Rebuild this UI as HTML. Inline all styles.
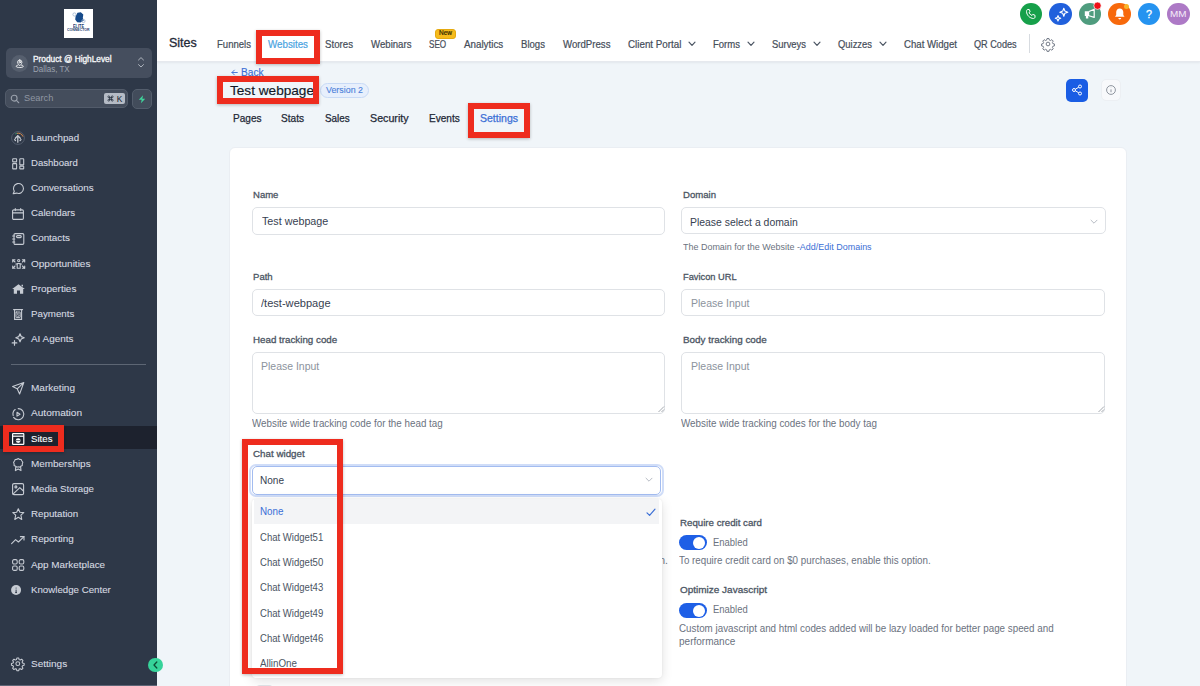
<!DOCTYPE html>
<html><head><meta charset="utf-8">
<style>
*{box-sizing:border-box;margin:0;padding:0}
html,body{width:1200px;height:686px;overflow:hidden;font-family:"Liberation Sans",sans-serif;position:relative;background:#f0f5f9}
.a{position:absolute}
.t{position:absolute;white-space:nowrap}
svg{overflow:visible}
</style></head><body>
<div class="a" style="left:0px;top:0px;width:1200px;height:686px;background:#f0f5f9"></div>
<div class="a" style="left:157px;top:0px;width:1043px;height:62px;background:#fff;box-shadow:0 1px 2px rgba(16,24,40,0.06);border-bottom:1px solid #e6e9ee"></div>
<div class="t " style="left:168.60px;top:37.32px;color:#1f2937;font-size:12.5px;line-height:12.5px;font-weight:normal;-webkit-text-stroke:0.3px #1f2937;transform:scaleX(1.0001);transform-origin:0 0;">Sites</div>
<div class="t " style="left:216.60px;top:39.75px;color:#454d59;font-size:10.1px;line-height:10.1px;font-weight:normal;-webkit-text-stroke:0.2px #454d59;transform:scaleX(0.9465);transform-origin:0 0;">Funnels</div>
<div class="t " style="left:268.00px;top:39.75px;color:#4aa3df;font-size:10.1px;line-height:10.1px;font-weight:normal;-webkit-text-stroke:0.2px #4aa3df;transform:scaleX(0.9679);transform-origin:0 0;">Websites</div>
<div class="t " style="left:325.20px;top:39.75px;color:#454d59;font-size:10.1px;line-height:10.1px;font-weight:normal;-webkit-text-stroke:0.2px #454d59;transform:scaleX(0.9593);transform-origin:0 0;">Stores</div>
<div class="t " style="left:370.50px;top:39.75px;color:#454d59;font-size:10.1px;line-height:10.1px;font-weight:normal;-webkit-text-stroke:0.2px #454d59;transform:scaleX(0.9540);transform-origin:0 0;">Webinars</div>
<div class="t " style="left:429.00px;top:39.75px;color:#454d59;font-size:10.1px;line-height:10.1px;font-weight:normal;-webkit-text-stroke:0.2px #454d59;transform:scaleX(0.8064);transform-origin:0 0;">SEO</div>
<div class="t " style="left:463.80px;top:39.75px;color:#454d59;font-size:10.1px;line-height:10.1px;font-weight:normal;-webkit-text-stroke:0.2px #454d59;transform:scaleX(0.9705);transform-origin:0 0;">Analytics</div>
<div class="t " style="left:521.00px;top:39.75px;color:#454d59;font-size:10.1px;line-height:10.1px;font-weight:normal;-webkit-text-stroke:0.2px #454d59;transform:scaleX(0.9505);transform-origin:0 0;">Blogs</div>
<div class="t " style="left:562.50px;top:39.75px;color:#454d59;font-size:10.1px;line-height:10.1px;font-weight:normal;-webkit-text-stroke:0.2px #454d59;transform:scaleX(0.9551);transform-origin:0 0;">WordPress</div>
<div class="t " style="left:627.60px;top:39.75px;color:#454d59;font-size:10.1px;line-height:10.1px;font-weight:normal;-webkit-text-stroke:0.2px #454d59;transform:scaleX(0.9712);transform-origin:0 0;">Client Portal</div>
<div class="t " style="left:713.00px;top:39.75px;color:#454d59;font-size:10.1px;line-height:10.1px;font-weight:normal;-webkit-text-stroke:0.2px #454d59;transform:scaleX(0.9437);transform-origin:0 0;">Forms</div>
<div class="t " style="left:772.00px;top:39.75px;color:#454d59;font-size:10.1px;line-height:10.1px;font-weight:normal;-webkit-text-stroke:0.2px #454d59;transform:scaleX(0.9323);transform-origin:0 0;">Surveys</div>
<div class="t " style="left:838.00px;top:39.75px;color:#454d59;font-size:10.1px;line-height:10.1px;font-weight:normal;-webkit-text-stroke:0.2px #454d59;transform:scaleX(0.9323);transform-origin:0 0;">Quizzes</div>
<div class="t " style="left:904.00px;top:39.75px;color:#454d59;font-size:10.1px;line-height:10.1px;font-weight:normal;-webkit-text-stroke:0.2px #454d59;transform:scaleX(0.9541);transform-origin:0 0;">Chat Widget</div>
<div class="t " style="left:974.40px;top:39.75px;color:#454d59;font-size:10.1px;line-height:10.1px;font-weight:normal;-webkit-text-stroke:0.2px #454d59;transform:scaleX(0.9040);transform-origin:0 0;">QR Codes</div>
<svg class="a" style="left:688px;top:41px" width="8" height="6" viewBox="0 0 8 6"><path d="M1 1.2 L4 4.4 L7 1.2" fill="none" stroke="#4b5563" stroke-width="1.2" stroke-linecap="round" stroke-linejoin="round"/></svg>
<svg class="a" style="left:747.4px;top:41px" width="8" height="6" viewBox="0 0 8 6"><path d="M1 1.2 L4 4.4 L7 1.2" fill="none" stroke="#4b5563" stroke-width="1.2" stroke-linecap="round" stroke-linejoin="round"/></svg>
<svg class="a" style="left:813px;top:41px" width="8" height="6" viewBox="0 0 8 6"><path d="M1 1.2 L4 4.4 L7 1.2" fill="none" stroke="#4b5563" stroke-width="1.2" stroke-linecap="round" stroke-linejoin="round"/></svg>
<svg class="a" style="left:879px;top:41px" width="8" height="6" viewBox="0 0 8 6"><path d="M1 1.2 L4 4.4 L7 1.2" fill="none" stroke="#4b5563" stroke-width="1.2" stroke-linecap="round" stroke-linejoin="round"/></svg>
<div class="a" style="left:435.2px;top:29px;width:20.6px;height:9.6px;background:#f6bb1c;border:0.6px solid #e5aa10;border-radius:3px"></div>
<div class="t " style="left:438.80px;top:30.44px;color:#2f2600;font-size:6.8px;line-height:6.8px;font-weight:normal;-webkit-text-stroke:0.2px #2f2600;transform:scaleX(0.9552);transform-origin:0 0;">New</div>
<div class="a" style="left:1029px;top:34px;width:1px;height:19px;background:#d7dbe0"></div>
<svg class="a" style="left:1041px;top:36.7px" width="14" height="14" viewBox="0 0 24 24"><path fill="none" stroke="#6b7280" stroke-width="1.6" stroke-linejoin="round" d="M10.3 2.6h3.4l.6 2.7 1.9.8 2.4-1.5 2.4 2.4-1.5 2.4.8 1.9 2.7.6v3.4l-2.7.6-.8 1.9 1.5 2.4-2.4 2.4-2.4-1.5-1.9.8-.6 2.7h-3.4l-.6-2.7-1.9-.8-2.4 1.5-2.4-2.4 1.5-2.4-.8-1.9-2.7-.6v-3.4l2.7-.6.8-1.9-1.5-2.4 2.4-2.4 2.4 1.5 1.9-.8z"/><circle cx="12" cy="12" r="3.2" fill="none" stroke="#6b7280" stroke-width="1.6"/></svg>
<div class="a" style="left:1019.75px;top:2.5px;width:22.5px;height:22.5px;background:#16a04a;border-radius:50%"></div>
<div class="a" style="left:1049.15px;top:2.5px;width:22.5px;height:22.5px;background:#2160dc;border-radius:50%"></div>
<div class="a" style="left:1078.75px;top:2.5px;width:22.5px;height:22.5px;background:#4f9c7e;border-radius:50%"></div>
<div class="a" style="left:1108.05px;top:2.5px;width:22.5px;height:22.5px;background:#f7690c;border-radius:50%"></div>
<div class="a" style="left:1137.5px;top:2.5px;width:22.5px;height:22.5px;background:#2593f0;border-radius:50%"></div>
<div class="a" style="left:1167.0px;top:2.5px;width:22.5px;height:22.5px;background:#ad79c6;border-radius:50%"></div>
<svg class="a" style="left:1025px;top:8px" width="12" height="12" viewBox="0 0 24 24"><path fill="none" stroke="#fff" stroke-width="2" stroke-linejoin="round" d="M5 3h3.5l1.8 4.5-2.3 1.6c1 2.4 3.4 4.8 5.9 5.9l1.6-2.3L20 14.5V18c0 1.7-1.3 3-3 3C9.3 20.5 3.5 14.7 3 7c0-1.7 1.3-4 2-4z"/></svg>
<svg class="a" style="left:1052.5px;top:6.5px" width="16" height="16" viewBox="0 0 16 16"><g fill="none" stroke="#fff" stroke-width="1.1" stroke-linejoin="round"><path d="M10.8 1.2 L11.9 4.1 L14.8 5.2 L11.9 6.3 L10.8 9.2 L9.7 6.3 L6.8 5.2 L9.7 4.1 Z"/><path d="M5 8.6 L5.8 10.5 L7.7 11.3 L5.8 12.1 L5 14 L4.2 12.1 L2.3 11.3 L4.2 10.5 Z"/></g></svg>
<svg class="a" style="left:1078px;top:0px" width="26" height="26" viewBox="0 0 26 26"><path d="M6.8 11.2 H11.2 V16 H6.8 Z M7.9 16 H10.3 V18.4 H7.9 Z" fill="#fff"/><path d="M11 11.5 L16.2 9.2 V17.4 L11 15.8" fill="none" stroke="#fff" stroke-width="1.2" stroke-linejoin="round"/><circle cx="19.5" cy="5.7" r="3.7" fill="#ee0f16" stroke="#fff" stroke-width="0.7"/></svg>
<svg class="a" style="left:1112.6px;top:6.8px" width="13.5" height="13.5" viewBox="0 0 24 24"><path fill="#fff" d="M12 2.5c-3.6 0-6.3 2.8-6.3 6.5v5L3.5 17.5h17L18.3 14V9c0-3.7-2.7-6.5-6.3-6.5z M9.5 19.5h5c0 1.4-1.1 2.5-2.5 2.5s-2.5-1.1-2.5-2.5z"/></svg>
<div class="a" style="left:1123.5px;top:4.3px;width:5px;height:5px;background:#f9b52b;border-radius:50%"></div>
<div class="t " style="left:1145.50px;top:8.71px;color:#fff;font-size:10.5px;line-height:10.5px;font-weight:normal;-webkit-text-stroke:0.3px #fff;transform:scaleX(1.0267);transform-origin:0 0;">?</div>
<div class="t " style="left:1170.00px;top:8.94px;color:#f5ecf9;font-size:9.4px;line-height:9.4px;font-weight:normal;;transform:scaleX(1.0560);transform-origin:0 0;">MM</div>
<svg class="a" style="left:230.5px;top:68.5px" width="7" height="7" viewBox="0 0 10 10"><path d="M9 5H1.5M4.8 1.6 1.4 5l3.4 3.4" fill="none" stroke="#3b6fd6" stroke-width="1.3" stroke-linecap="round" stroke-linejoin="round"/></svg>
<div class="t " style="left:240.70px;top:67.78px;color:#3b6fd6;font-size:10px;line-height:10px;font-weight:normal;-webkit-text-stroke:0.15px #3b6fd6;transform:scaleX(1.0119);transform-origin:0 0;">Back</div>
<div class="t " style="left:230.25px;top:83.80px;color:#111827;font-size:13px;line-height:13px;font-weight:normal;-webkit-text-stroke:0.15px #111827;transform:scaleX(1.0469);transform-origin:0 0;">Test webpage</div>
<div class="a" style="left:320.25px;top:83.25px;width:48.5px;height:14.25px;background:#e7effc;border:1px solid #c8daf6;border-radius:8px"></div>
<div class="t " style="left:326.25px;top:86.18px;color:#4a80da;font-size:9px;line-height:9px;font-weight:normal;-webkit-text-stroke:0.1px #4a80da;transform:scaleX(0.9858);transform-origin:0 0;">Version 2</div>
<div class="a" style="left:1066.2px;top:79px;width:22.2px;height:22.6px;background:#1a5de4;border-radius:5px"></div>
<svg class="a" style="left:1071.2px;top:84.2px" width="12" height="12" viewBox="0 0 24 24"><g fill="none" stroke="#fff" stroke-width="2"><circle cx="18" cy="5" r="3"/><circle cx="6" cy="12" r="3"/><circle cx="18" cy="19" r="3"/><path d="M8.6 13.5l6.8 4M15.4 6.5l-6.8 4"/></g></svg>
<div class="a" style="left:1101px;top:79.3px;width:20px;height:22px;background:#f8f9fb;border:1px solid #eceff3;border-radius:5px"></div>
<svg class="a" style="left:1104.9px;top:84.3px" width="12" height="12" viewBox="0 0 24 24"><g fill="none" stroke="#7d848f" stroke-width="1.7"><circle cx="12" cy="12" r="8.8"/><path d="M12 10.8v5.6M12 7.6v.4"/></g></svg>
<div class="t " style="left:232.50px;top:114.18px;color:#1f2937;font-size:10.3px;line-height:10.3px;font-weight:normal;-webkit-text-stroke:0.25px #1f2937;transform:scaleX(0.9759);transform-origin:0 0;">Pages</div>
<div class="t " style="left:281.25px;top:114.18px;color:#1f2937;font-size:10.3px;line-height:10.3px;font-weight:normal;-webkit-text-stroke:0.25px #1f2937;transform:scaleX(0.9800);transform-origin:0 0;">Stats</div>
<div class="t " style="left:324.75px;top:114.18px;color:#1f2937;font-size:10.3px;line-height:10.3px;font-weight:normal;-webkit-text-stroke:0.25px #1f2937;transform:scaleX(0.9606);transform-origin:0 0;">Sales</div>
<div class="t " style="left:369.70px;top:114.18px;color:#1f2937;font-size:10.3px;line-height:10.3px;font-weight:normal;-webkit-text-stroke:0.25px #1f2937;transform:scaleX(1.0375);transform-origin:0 0;">Security</div>
<div class="t " style="left:428.70px;top:114.18px;color:#1f2937;font-size:10.3px;line-height:10.3px;font-weight:normal;-webkit-text-stroke:0.25px #1f2937;transform:scaleX(0.9783);transform-origin:0 0;">Events</div>
<div class="t " style="left:480.00px;top:114.18px;color:#3b6fd6;font-size:10.3px;line-height:10.3px;font-weight:normal;-webkit-text-stroke:0.25px #3b6fd6;transform:scaleX(1.0210);transform-origin:0 0;">Settings</div>
<div class="a" style="left:229.3px;top:147px;width:898.2px;height:560px;background:#fff;border:1px solid #eaeef3;border-radius:6px"></div>
<div class="t " style="left:252.80px;top:190.42px;color:#4b5563;font-size:9.9px;line-height:9.9px;font-weight:normal;-webkit-text-stroke:0.3px #4b5563;transform:scaleX(0.9642);transform-origin:0 0;">Name</div>
<div class="a" style="left:251.5px;top:207px;width:413px;height:27.5px;background:#fff;border:1px solid #dfe2e6;border-radius:5px;"></div>
<div class="t " style="left:261.50px;top:216.20px;color:#374151;font-size:10.75px;line-height:10.75px;font-weight:normal;;transform:scaleX(0.9993);transform-origin:0 0;">Test webpage</div>
<div class="t " style="left:683.20px;top:190.42px;color:#4b5563;font-size:9.9px;line-height:9.9px;font-weight:normal;-webkit-text-stroke:0.3px #4b5563;transform:scaleX(0.9697);transform-origin:0 0;">Domain</div>
<div class="a" style="left:681.4px;top:207.2px;width:424.4px;height:27.2px;background:#fff;border:1px solid #dfe2e6;border-radius:5px;"></div>
<div class="t " style="left:690.20px;top:216.51px;color:#374151;font-size:10.5px;line-height:10.5px;font-weight:normal;;transform:scaleX(0.9928);transform-origin:0 0;">Please select a domain</div>
<svg class="a" style="left:1090px;top:218.6px" width="8" height="6" viewBox="0 0 8 6"><path d="M1 1.2 L4 4.2 L7 1.2" fill="none" stroke="#b7bcc4" stroke-width="1" stroke-linecap="round"/></svg>
<div class="t " style="left:682.50px;top:242.88px;color:#6b7280;font-size:9px;line-height:9px;font-weight:normal;;transform:scaleX(0.9956);transform-origin:0 0;">The Domain for the Website -<span style="color:#3b6fd6">Add/Edit Domains</span></div>
<div class="t " style="left:253.00px;top:272.12px;color:#4b5563;font-size:9.9px;line-height:9.9px;font-weight:normal;-webkit-text-stroke:0.3px #4b5563;transform:scaleX(0.9691);transform-origin:0 0;">Path</div>
<div class="a" style="left:251.5px;top:288.6px;width:413px;height:27.5px;background:#fff;border:1px solid #dfe2e6;border-radius:5px;"></div>
<div class="t " style="left:260.90px;top:297.70px;color:#374151;font-size:10.75px;line-height:10.75px;font-weight:normal;;transform:scaleX(1.0306);transform-origin:0 0;">/test-webpage</div>
<div class="t " style="left:683.00px;top:272.12px;color:#4b5563;font-size:9.9px;line-height:9.9px;font-weight:normal;-webkit-text-stroke:0.3px #4b5563;transform:scaleX(0.9408);transform-origin:0 0;">Favicon URL</div>
<div class="a" style="left:681.4px;top:288.6px;width:424px;height:27.5px;background:#fff;border:1px solid #dfe2e6;border-radius:5px;"></div>
<div class="t " style="left:691.40px;top:298.30px;color:#8c939d;font-size:10.75px;line-height:10.75px;font-weight:normal;;transform:scaleX(0.9788);transform-origin:0 0;">Please Input</div>
<div class="t " style="left:253.00px;top:334.82px;color:#4b5563;font-size:9.9px;line-height:9.9px;font-weight:normal;-webkit-text-stroke:0.3px #4b5563;transform:scaleX(0.9895);transform-origin:0 0;">Head tracking code</div>
<div class="a" style="left:251.5px;top:351.6px;width:413px;height:62.5px;background:#fff;border:1px solid #dfe2e6;border-radius:5px;"></div>
<div class="t " style="left:261.40px;top:361.40px;color:#8c939d;font-size:10.75px;line-height:10.75px;font-weight:normal;;transform:scaleX(0.9738);transform-origin:0 0;">Please Input</div>
<div class="t " style="left:683.00px;top:334.82px;color:#4b5563;font-size:9.9px;line-height:9.9px;font-weight:normal;-webkit-text-stroke:0.3px #4b5563;transform:scaleX(0.9976);transform-origin:0 0;">Body tracking code</div>
<div class="a" style="left:681.4px;top:351.6px;width:424px;height:62.5px;background:#fff;border:1px solid #dfe2e6;border-radius:5px;"></div>
<div class="t " style="left:691.40px;top:361.40px;color:#8c939d;font-size:10.75px;line-height:10.75px;font-weight:normal;;transform:scaleX(0.9788);transform-origin:0 0;">Please Input</div>
<svg class="a" style="left:656.5px;top:405px" width="8" height="8" viewBox="0 0 8 8"><path d="M1.5 7 L7 1.5 M4.5 7 L7 4.5" stroke="#8d939b" stroke-width="0.8" fill="none"/></svg>
<svg class="a" style="left:1097.4px;top:405px" width="8" height="8" viewBox="0 0 8 8"><path d="M1.5 7 L7 1.5 M4.5 7 L7 4.5" stroke="#8d939b" stroke-width="0.8" fill="none"/></svg>
<div class="t " style="left:251.50px;top:418.50px;color:#6b7280;font-size:10.4px;line-height:10.4px;font-weight:normal;;transform:scaleX(0.9442);transform-origin:0 0;">Website wide tracking code for the head tag</div>
<div class="t " style="left:681.40px;top:418.50px;color:#6b7280;font-size:10.4px;line-height:10.4px;font-weight:normal;;transform:scaleX(0.9482);transform-origin:0 0;">Website wide tracking codes for the body tag</div>
<div class="t " style="left:252.80px;top:449.42px;color:#4b5563;font-size:9.9px;line-height:9.9px;font-weight:normal;-webkit-text-stroke:0.3px #4b5563;transform:scaleX(0.9913);transform-origin:0 0;">Chat widget</div>
<div class="a" style="left:249.3px;top:463.8px;width:414.5px;height:33px;border:2.5px solid #d0ddf8;border-radius:7px"></div>
<div class="a" style="left:251.5px;top:466px;width:409.5px;height:28.5px;background:#fff;border:1px solid #a3bcf0;border-radius:5px"></div>
<div class="t " style="left:260.00px;top:475.88px;color:#374151;font-size:10.3px;line-height:10.3px;font-weight:normal;;transform:scaleX(0.9746);transform-origin:0 0;">None</div>
<svg class="a" style="left:645px;top:477px" width="8" height="6" viewBox="0 0 8 6"><path d="M1 1.2 L4 4.2 L7 1.2" fill="none" stroke="#b7bcc4" stroke-width="1" stroke-linecap="round"/></svg>
<div class="t " style="left:680.30px;top:517.82px;color:#4b5563;font-size:9.9px;line-height:9.9px;font-weight:normal;-webkit-text-stroke:0.3px #4b5563;transform:scaleX(0.9828);transform-origin:0 0;">Require credit card</div>
<div class="a" style="left:678.7px;top:535.3px;width:28px;height:15px;background:#1e5fe6;border-radius:8px"></div>
<div class="a" style="left:692.7px;top:536.8px;width:12px;height:12px;background:#fff;border-radius:50%"></div>
<div class="t " style="left:712.50px;top:537.80px;color:#6b7280;font-size:10.4px;line-height:10.4px;font-weight:normal;;transform:scaleX(0.9098);transform-origin:0 0;">Enabled</div>
<div class="t " style="left:678.80px;top:555.70px;color:#6b7280;font-size:10.4px;line-height:10.4px;font-weight:normal;;transform:scaleX(0.9412);transform-origin:0 0;">To require credit card on $0 purchases, enable this option.</div>
<div class="t " style="left:653.50px;top:555.70px;color:#6b7280;font-size:10.4px;line-height:10.4px;font-weight:normal;;">on.</div>
<div class="t " style="left:680.30px;top:585.32px;color:#4b5563;font-size:9.9px;line-height:9.9px;font-weight:normal;-webkit-text-stroke:0.3px #4b5563;transform:scaleX(1.0098);transform-origin:0 0;">Optimize Javascript</div>
<div class="a" style="left:678.7px;top:603px;width:28px;height:15px;background:#1e5fe6;border-radius:8px"></div>
<div class="a" style="left:692.7px;top:604.5px;width:12px;height:12px;background:#fff;border-radius:50%"></div>
<div class="t " style="left:713.00px;top:605.30px;color:#6b7280;font-size:10.4px;line-height:10.4px;font-weight:normal;;transform:scaleX(0.9098);transform-origin:0 0;">Enabled</div>
<div class="t " style="left:678.70px;top:623.70px;color:#6b7280;font-size:10.4px;line-height:10.4px;font-weight:normal;;transform:scaleX(0.9440);transform-origin:0 0;">Custom javascript and html codes added will be lazy loaded for better page speed and</div>
<div class="t " style="left:678.70px;top:637.00px;color:#6b7280;font-size:10.4px;line-height:10.4px;font-weight:normal;;transform:scaleX(0.9641);transform-origin:0 0;">performance</div>
<div class="a" style="left:256.4px;top:684.5px;width:16.5px;height:8px;background:#e3e5e9;border-radius:4px"></div>
<div class="a" style="left:252px;top:498.5px;width:409.5px;height:179.2px;background:#fff;border-radius:4px;box-shadow:0 3px 12px rgba(0,0,0,0.12),0 0 2px rgba(0,0,0,0.08)"></div>
<div class="a" style="left:253.9px;top:499.3px;width:405.5px;height:24.5px;background:#f3f4f6"></div>
<div class="t " style="left:260.00px;top:507.13px;color:#3b6fd6;font-size:10px;line-height:10px;font-weight:normal;;transform:scaleX(0.9830);transform-origin:0 0;">None</div>
<svg class="a" style="left:645.5px;top:507.5px" width="10" height="9" viewBox="0 0 10 9"><path d="M1 4.8 L3.6 7.4 L9 1.2" fill="none" stroke="#3b6fd6" stroke-width="1.2" stroke-linecap="round" stroke-linejoin="round"/></svg>
<div class="t " style="left:260.00px;top:531.81px;color:#4b5563;font-size:10.5px;line-height:10.5px;font-weight:normal;;transform:scaleX(0.9098);transform-origin:0 0;">Chat Widget51</div>
<div class="t " style="left:260.00px;top:557.06px;color:#4b5563;font-size:10.5px;line-height:10.5px;font-weight:normal;;transform:scaleX(0.9098);transform-origin:0 0;">Chat Widget50</div>
<div class="t " style="left:260.00px;top:582.31px;color:#4b5563;font-size:10.5px;line-height:10.5px;font-weight:normal;;transform:scaleX(0.9098);transform-origin:0 0;">Chat Widget43</div>
<div class="t " style="left:260.00px;top:607.56px;color:#4b5563;font-size:10.5px;line-height:10.5px;font-weight:normal;;transform:scaleX(0.9098);transform-origin:0 0;">Chat Widget49</div>
<div class="t " style="left:260.00px;top:632.81px;color:#4b5563;font-size:10.5px;line-height:10.5px;font-weight:normal;;transform:scaleX(0.9098);transform-origin:0 0;">Chat Widget46</div>
<div class="t " style="left:260.00px;top:658.06px;color:#4b5563;font-size:10.5px;line-height:10.5px;font-weight:normal;;transform:scaleX(0.9319);transform-origin:0 0;">AllinOne</div>
<div class="a" style="left:0px;top:0px;width:157px;height:686px;background:#2e3848"></div>
<div class="a" style="left:64px;top:9px;width:29px;height:29px;background:#fff"></div>
<svg class="a" style="left:71px;top:11px" width="16" height="13" viewBox="0 0 16 13"><path d="M6.5 1.8 L9.8 1.2 L12.3 3.6 L11.8 7 L12.8 9.5 L9.5 11.6 L6.2 11.2 L4.2 8.6 L4.6 5.2 Z" fill="#164a8a"/><circle cx="3.5" cy="3.5" r="1.6" fill="none" stroke="#9fb6d0" stroke-width="0.8"/><circle cx="12.5" cy="10" r="1.6" fill="none" stroke="#9fb6d0" stroke-width="0.8"/></svg>
<div class="t " style="left:72.90px;top:23.50px;color:#233b6e;font-size:5.2px;line-height:5.2px;font-weight:bold;;transform:scaleX(0.7549);transform-origin:0 0;">ELITE</div>
<div class="t " style="left:67.30px;top:28.31px;color:#233b6e;font-size:4px;line-height:4px;font-weight:bold;;transform:scaleX(0.8748);transform-origin:0 0;">CONNECTOR</div>
<div class="a" style="left:6px;top:48.3px;width:146px;height:29.3px;background:#454e5e;border-radius:5px"></div>
<div class="a" style="left:11px;top:54.7px;width:17.3px;height:17.3px;background:#565f6e;border-radius:50%"></div>
<svg class="a" style="left:15px;top:58.5px" width="9.5" height="9.5" viewBox="0 0 24 24"><g fill="none" stroke="#fff" stroke-width="2.2" stroke-linecap="round" stroke-linejoin="round"><path d="M12 2.5a5.5 5.5 0 0 0-5.5 5.5c0 4 5.5 9 5.5 9s5.5-5 5.5-9A5.5 5.5 0 0 0 12 2.5z"/><circle cx="12" cy="8" r="1.9"/><path d="M7.5 15.5C4.5 16 3 17 3 18.5 3 20.5 7 21.5 12 21.5s9-1 9-3c0-1.5-1.5-2.5-4.5-3"/></g></svg>
<div class="t " style="left:32.70px;top:54.64px;color:#f3f4f6;font-size:8.7px;line-height:8.7px;font-weight:normal;-webkit-text-stroke:0.35px #f3f4f6;transform:scaleX(0.9558);transform-origin:0 0;">Product @ HighLevel</div>
<div class="t " style="left:32.70px;top:64.72px;color:#9ca3af;font-size:8.6px;line-height:8.6px;font-weight:normal;;transform:scaleX(0.9269);transform-origin:0 0;">Dallas, TX</div>
<svg class="a" style="left:137.3px;top:57px" width="8" height="11" viewBox="0 0 8 11"><path d="M1.5 3 L4 0.6 L6.5 3 M1.5 7.6 L4 10 L6.5 7.6" fill="none" stroke="#aeb4bd" stroke-width="1" stroke-linecap="round" stroke-linejoin="round"/></svg>
<div class="a" style="left:5.3px;top:89px;width:122.7px;height:19.3px;background:#444d5c;border-radius:5px;border:1px solid #525b6a"></div>
<svg class="a" style="left:9.5px;top:94px" width="10" height="10" viewBox="0 0 24 24"><g fill="none" stroke="#9aa1ac" stroke-width="2.6" stroke-linecap="round"><circle cx="10" cy="10" r="7"/><path d="M15.5 15.5 21 21"/></g></svg>
<div class="t " style="left:23.70px;top:93.30px;color:#8f96a2;font-size:9.8px;line-height:9.8px;font-weight:normal;;transform:scaleX(0.9437);transform-origin:0 0;">Search</div>
<div class="a" style="left:104px;top:93px;width:21px;height:11px;background:#b5bbc5;border-radius:2px"></div>
<svg class="a" style="left:106.5px;top:95px" width="7" height="7" viewBox="0 0 24 24"><path d="M9 9V6a3 3 0 1 0-3 3h12a3 3 0 1 0-3-3v12a3 3 0 1 0 3-3H6a3 3 0 1 0 3 3z" fill="none" stroke="#1f2937" stroke-width="2.6"/></svg>
<div class="t " style="left:116.80px;top:94.97px;color:#111827;font-size:8.3px;line-height:8.3px;font-weight:normal;;">K</div>
<div class="a" style="left:132px;top:88.7px;width:19.7px;height:20px;background:#424c5b;border:1px solid #535d6c;border-radius:5px"></div>
<svg class="a" style="left:137.8px;top:94.6px" width="8" height="8.4" viewBox="0 0 10 11"><path d="M6.4 0.3 L0.8 6.2 H4.6 L3.6 10.7 L9.2 4.8 H5.4 Z" fill="#3fd59c"/></svg>
<div class="a" style="left:0px;top:426px;width:157px;height:23.4px;background:#1d222e"></div>
<div class="a" style="left:0px;top:685px;width:157px;height:1px;background:#5d6576"></div>
<div class="a" style="left:11px;top:363.6px;width:135px;height:1.2px;background:#5d6674"></div>
<div class="t " style="left:31.00px;top:132.62px;color:#d6dae0;font-size:9.9px;line-height:9.9px;font-weight:normal;-webkit-text-stroke:0.1px #d6dae0;transform:scaleX(0.9862);transform-origin:0 0;">Launchpad</div>
<div class="t " style="left:31.00px;top:157.82px;color:#d6dae0;font-size:9.9px;line-height:9.9px;font-weight:normal;-webkit-text-stroke:0.1px #d6dae0;transform:scaleX(0.9687);transform-origin:0 0;">Dashboard</div>
<div class="t " style="left:31.00px;top:183.02px;color:#d6dae0;font-size:9.9px;line-height:9.9px;font-weight:normal;-webkit-text-stroke:0.1px #d6dae0;transform:scaleX(0.9917);transform-origin:0 0;">Conversations</div>
<div class="t " style="left:31.00px;top:208.22px;color:#d6dae0;font-size:9.9px;line-height:9.9px;font-weight:normal;-webkit-text-stroke:0.1px #d6dae0;transform:scaleX(0.9819);transform-origin:0 0;">Calendars</div>
<div class="t " style="left:31.00px;top:233.42px;color:#d6dae0;font-size:9.9px;line-height:9.9px;font-weight:normal;-webkit-text-stroke:0.1px #d6dae0;transform:scaleX(1.0004);transform-origin:0 0;">Contacts</div>
<div class="t " style="left:31.00px;top:258.62px;color:#d6dae0;font-size:9.9px;line-height:9.9px;font-weight:normal;-webkit-text-stroke:0.1px #d6dae0;transform:scaleX(1.0113);transform-origin:0 0;">Opportunities</div>
<div class="t " style="left:31.00px;top:283.82px;color:#d6dae0;font-size:9.9px;line-height:9.9px;font-weight:normal;-webkit-text-stroke:0.1px #d6dae0;transform:scaleX(1.0085);transform-origin:0 0;">Properties</div>
<div class="t " style="left:31.00px;top:309.02px;color:#d6dae0;font-size:9.9px;line-height:9.9px;font-weight:normal;-webkit-text-stroke:0.1px #d6dae0;transform:scaleX(0.9858);transform-origin:0 0;">Payments</div>
<div class="t " style="left:31.00px;top:334.22px;color:#d6dae0;font-size:9.9px;line-height:9.9px;font-weight:normal;-webkit-text-stroke:0.1px #d6dae0;transform:scaleX(1.0052);transform-origin:0 0;">AI Agents</div>
<div class="t " style="left:31.00px;top:383.22px;color:#d6dae0;font-size:9.9px;line-height:9.9px;font-weight:normal;-webkit-text-stroke:0.1px #d6dae0;transform:scaleX(1.0148);transform-origin:0 0;">Marketing</div>
<div class="t " style="left:31.00px;top:408.42px;color:#d6dae0;font-size:9.9px;line-height:9.9px;font-weight:normal;-webkit-text-stroke:0.1px #d6dae0;transform:scaleX(1.0206);transform-origin:0 0;">Automation</div>
<div class="t " style="left:31.00px;top:433.62px;color:#ffffff;font-size:9.9px;line-height:9.9px;font-weight:normal;-webkit-text-stroke:0.1px #ffffff;transform:scaleX(0.9787);transform-origin:0 0;">Sites</div>
<div class="t " style="left:31.00px;top:458.82px;color:#d6dae0;font-size:9.9px;line-height:9.9px;font-weight:normal;-webkit-text-stroke:0.1px #d6dae0;transform:scaleX(1.0054);transform-origin:0 0;">Memberships</div>
<div class="t " style="left:31.00px;top:484.02px;color:#d6dae0;font-size:9.9px;line-height:9.9px;font-weight:normal;-webkit-text-stroke:0.1px #d6dae0;transform:scaleX(0.9808);transform-origin:0 0;">Media Storage</div>
<div class="t " style="left:31.00px;top:509.22px;color:#d6dae0;font-size:9.9px;line-height:9.9px;font-weight:normal;-webkit-text-stroke:0.1px #d6dae0;transform:scaleX(0.9882);transform-origin:0 0;">Reputation</div>
<div class="t " style="left:31.00px;top:534.42px;color:#d6dae0;font-size:9.9px;line-height:9.9px;font-weight:normal;-webkit-text-stroke:0.1px #d6dae0;transform:scaleX(0.9993);transform-origin:0 0;">Reporting</div>
<div class="t " style="left:31.00px;top:559.62px;color:#d6dae0;font-size:9.9px;line-height:9.9px;font-weight:normal;-webkit-text-stroke:0.1px #d6dae0;transform:scaleX(0.9999);transform-origin:0 0;">App Marketplace</div>
<div class="t " style="left:31.00px;top:584.82px;color:#d6dae0;font-size:9.9px;line-height:9.9px;font-weight:normal;-webkit-text-stroke:0.1px #d6dae0;transform:scaleX(0.9822);transform-origin:0 0;">Knowledge Center</div>
<div class="t " style="left:31.00px;top:658.62px;color:#d6dae0;font-size:9.9px;line-height:9.9px;font-weight:normal;-webkit-text-stroke:0.1px #d6dae0;transform:scaleX(1.0144);transform-origin:0 0;">Settings</div>
<svg class="a" style="left:10.9px;top:131.3px" width="14" height="14" viewBox="0 0 14 14"><circle cx="7" cy="7" r="6.4" fill="none" stroke="#566071" stroke-width="0.9"/><path d="M5.6 2.4 A5.6 5.6 0 0 1 12 5.6" fill="none" stroke="#d98a4a" stroke-width="1"/><path d="M4 3.2 A5.6 5.6 0 0 1 6 2.3" fill="none" stroke="#3d8a6a" stroke-width="1"/><path d="M6.8 11.2V4.6M4.3 7.2l2.5-2.6 2.5 2.6M4.5 9.5 3.6 8.6M9.1 9.5l.9-.9" fill="none" stroke="#c6cbd3" stroke-width="1.3" stroke-linecap="round" stroke-linejoin="round"/></svg>
<svg class="a" style="left:12.2px;top:157.6px" width="12.4" height="11.6" viewBox="0 0 12.4 11.6"><g fill="none" stroke="#c6cbd3" stroke-width="1.1"><rect x="0.7" y="0.7" width="3.9" height="3.2" rx="0.45"/><rect x="0.7" y="5.6" width="3.9" height="5.3" rx="0.45"/><rect x="7.8" y="0.7" width="3.9" height="6.2" rx="0.45"/><rect x="7.8" y="8.1" width="3.9" height="2.8" rx="0.45"/></g></svg>
<svg class="a" style="left:12.3px;top:182.5px" width="12" height="11.6" viewBox="0 0 12 11.6"><path d="M1.2 10.8 L2.3 8.2 A5 5 0 1 1 4.6 10.1 Z" fill="none" stroke="#c6cbd3" stroke-width="1.1" stroke-linejoin="round"/></svg>
<svg class="a" style="left:12.4px;top:207.9px" width="12" height="12" viewBox="0 0 12 12"><g fill="none" stroke="#c6cbd3" stroke-width="1.1" stroke-linecap="round"><rect x="0.6" y="1.9" width="10.8" height="9.5" rx="1.2"/><path d="M0.6 4.9H11.4M3.3 0.6V2.6M8.7 0.6V2.6"/></g></svg>
<svg class="a" style="left:11.8px;top:233px" width="12.4" height="12" viewBox="0 0 12.4 12"><g fill="none" stroke="#c6cbd3" stroke-width="1.1" stroke-linecap="round"><rect x="2" y="0.6" width="9.8" height="10.8" rx="1.2"/><rect x="4.5" y="2.6" width="4.8" height="2" rx="1"/><path d="M0.6 3H2.8M0.6 6H2.8M0.6 9H2.8"/></g></svg>
<svg class="a" style="left:11.5px;top:258.8px" width="13.4" height="10" viewBox="0 0 13.4 10"><g fill="none" stroke="#c6cbd3" stroke-width="1.1" stroke-linecap="round" stroke-linejoin="round"><path d="M0.7 0.7H3M0.7 0.7V3M0.7 0.7L3 3"/><path d="M12.7 0.7H10.4M12.7 0.7V3M12.7 0.7L10.4 3"/><path d="M0.7 9.3H3M0.7 9.3V7M0.7 9.3L3 7"/><path d="M12.7 9.3H10.4M12.7 9.3V7M12.7 9.3L10.4 7"/><circle cx="6.7" cy="1.6" r="1.1"/><path d="M5.2 9.3V4.5H8.2V9.3Z"/><path d="M5.2 5H3.8M8.2 5H9.6"/></g></svg>
<svg class="a" style="left:11.7px;top:284.2px" width="13" height="10" viewBox="0 0 13 10"><path d="M6.5 0.2 L12.8 5 L11.2 5 L11.2 9.8 L8 9.8 L8 6.5 L5 6.5 L5 9.8 L1.8 9.8 L1.8 5 L0.2 5 Z M9.5 0.8 H11 V2.8 L9.5 1.7 Z" fill="#c6cbd3"/></svg>
<svg class="a" style="left:12.9px;top:308.9px" width="10.2" height="11" viewBox="0 0 10.2 11"><g fill="none" stroke="#c6cbd3" stroke-width="1.1" stroke-linecap="round"><path d="M0.6 0.6H9.6M1.6 0.6V10.4H8.6V0.6"/><rect x="3" y="3" width="4.2" height="5.5" rx="0.3" stroke-width="0.9"/><path d="M6.1 4.4C5.5 3.9 4.1 4 4.1 4.9S6.2 5.7 6.2 6.7 4.6 7.6 4 7.1" stroke-width="0.8"/></g></svg>
<svg class="a" style="left:11.2px;top:333.4px" width="14" height="12.8" viewBox="0 0 14 12.8"><g fill="none" stroke="#c6cbd3" stroke-width="1.2" stroke-linecap="round" stroke-linejoin="round"><path d="M9 0.8 L10.2 3.6 L13.2 4.8 L10.2 6 L9 8.8 L7.8 6 L4.8 4.8 L7.8 3.6 Z"/><path d="M3.5 7.6V12.2M1.2 9.9H5.8"/></g></svg>
<svg class="a" style="left:12px;top:382px" width="12.4" height="12.6" viewBox="0 0 12.4 12.6"><path d="M11.8 0.6 L0.6 4.6 L5.2 6.8 L7.6 12 Z M11.8 0.6 L5.2 6.8" fill="none" stroke="#c6cbd3" stroke-width="1.1" stroke-linejoin="round"/></svg>
<svg class="a" style="left:11.8px;top:407.5px" width="12.4" height="12.4" viewBox="0 0 12.4 12.4"><g fill="none" stroke="#c6cbd3" stroke-width="1.1" stroke-linecap="round" stroke-linejoin="round"><path d="M6.2 0.6 A5.6 5.6 0 1 1 1.6 9.4"/><path d="M1.2 7.5 A5.6 5.6 0 0 1 3.2 1.5"/><path d="M5 4.3 L8 6.2 L5 8.1 Z"/></g></svg>
<svg class="a" style="left:11.8px;top:433px" width="12.4" height="12" viewBox="0 0 12.4 12"><g fill="none" stroke="#fff" stroke-width="1.2"><rect x="0.6" y="0.6" width="11.2" height="10.8" rx="0.6"/><path d="M0.6 3.2H11.8"/></g><circle cx="6.2" cy="7.6" r="2.4" fill="#fff"/><path d="M3.8 7.6H8.6" stroke="#1d222e" stroke-width="0.7"/></svg>
<svg class="a" style="left:12.8px;top:457.5px" width="10.4" height="13.2" viewBox="0 0 10.4 13.2"><g fill="none" stroke="#c6cbd3" stroke-width="1.1" stroke-linejoin="round"><path d="M5.2 0.6 L6.6 1.4 L8.2 1.5 L8.9 3 L9.8 4.3 L9.3 5.9 L9.3 7.5 L7.8 8.2 L6.6 9.2 L5.2 8.8 L3.8 9.2 L2.6 8.2 L1.1 7.5 L1.1 5.9 L0.6 4.3 L1.5 3 L2.2 1.5 L3.8 1.4 Z"/><path d="M2.8 8.6 L2.4 12.6 L5.2 11 L8 12.6 L7.6 8.6"/></g></svg>
<svg class="a" style="left:12px;top:483px" width="12.2" height="12.2" viewBox="0 0 12.2 12.2"><g fill="none" stroke="#c6cbd3" stroke-width="1.1" stroke-linecap="round" stroke-linejoin="round"><rect x="0.6" y="0.6" width="11" height="11" rx="1.4"/><circle cx="3.9" cy="3.9" r="1"/><path d="M1 11.2 L7.8 4.6 L11.4 8"/></g></svg>
<svg class="a" style="left:11.7px;top:508.3px" width="12.6" height="12.2" viewBox="0 0 12.6 12.2"><path d="M6.3 0.7 L7.9 4.3 L11.8 4.6 L8.9 7.2 L9.8 11.5 L6.3 9.3 L2.8 11.5 L3.7 7.2 L0.8 4.6 L4.7 4.3 Z" fill="none" stroke="#c6cbd3" stroke-width="1.1" stroke-linejoin="round"/></svg>
<svg class="a" style="left:11.2px;top:535.8px" width="13.8" height="8.2" viewBox="0 0 13.8 8.2"><g fill="none" stroke="#c6cbd3" stroke-width="1.1" stroke-linecap="round" stroke-linejoin="round"><path d="M0.6 7.6 L4.6 3.6 L7.4 6 L13 0.6"/><path d="M9.4 0.6 H13 V4"/></g></svg>
<svg class="a" style="left:11.8px;top:559px" width="12.4" height="12" viewBox="0 0 12.4 12"><g fill="none" stroke="#c6cbd3" stroke-width="1.1"><rect x="0.6" y="0.6" width="4.6" height="4.4" rx="1.4"/><rect x="7.2" y="0.6" width="4.6" height="4.4" rx="1.4"/><rect x="0.6" y="7" width="4.6" height="4.4" rx="1.4"/><rect x="7.2" y="7" width="4.6" height="4.4" rx="1.4"/></g></svg>
<svg class="a" style="left:11px;top:584.5px" width="10.2" height="10.2" viewBox="0 0 10.2 10.2"><circle cx="5.1" cy="5.1" r="5" fill="#c6cbd3"/><path d="M5.1 4.6V7.6M4.2 7.6H6" stroke="#2e3848" stroke-width="1" fill="none"/><circle cx="5.1" cy="3" r="0.6" fill="#2e3848"/></svg>
<svg class="a" style="left:11.3px;top:657.2px" width="13.6" height="13.4" viewBox="0 0 24 24"><path fill="none" stroke="#c6cbd3" stroke-width="1.9" stroke-linejoin="round" d="M10.3 1.8h3.4l.7 2.9 1.9.8 2.6-1.6 2.4 2.4-1.6 2.6.8 1.9 2.9.7v3.4l-2.9.7-.8 1.9 1.6 2.6-2.4 2.4-2.6-1.6-1.9.8-.7 2.9h-3.4l-.7-2.9-1.9-.8-2.6 1.6-2.4-2.4 1.6-2.6-.8-1.9-2.9-.7v-3.4l2.9-.7.8-1.9-1.6-2.6 2.4-2.4 2.6 1.6 1.9-.8z"/><circle cx="12" cy="12" r="3.4" fill="none" stroke="#c6cbd3" stroke-width="1.9"/></svg>
<div class="a" style="left:148.3px;top:657.7px;width:14.4px;height:14.4px;background:#36d39a;border-radius:50%"></div>
<svg class="a" style="left:152px;top:661px" width="7" height="8" viewBox="0 0 7 8"><path d="M4.8 1 L2 4 L4.8 7" fill="none" stroke="#0d4d36" stroke-width="1.3" stroke-linecap="round" stroke-linejoin="round"/></svg>
<div class="a" style="left:256px;top:29.5px;width:64px;height:34.5px;border:6.5px solid #ee2c1e;box-shadow:0 1px 3px rgba(0,0,0,0.25)"></div>
<div class="a" style="left:216.6px;top:76px;width:102.6px;height:28px;border:6px solid #ee2c1e;border-left-width:6.5px;box-shadow:0 1px 3px rgba(0,0,0,0.25)"></div>
<div class="a" style="left:468px;top:102.8px;width:62.3px;height:35.2px;border:6.5px solid #ee2c1e;box-shadow:0 1px 3px rgba(0,0,0,0.25)"></div>
<div class="a" style="left:3px;top:424.6px;width:60.8px;height:27.5px;border:6.5px solid #ee2c1e;border-top-width:7px;border-right-width:6.9px;box-shadow:0 1px 3px rgba(0,0,0,0.25)"></div>
<div class="a" style="left:242px;top:439px;width:101.2px;height:234.5px;border:6.3px solid #ee2c1e;box-shadow:0 1px 3px rgba(0,0,0,0.25)"></div>
</body></html>
